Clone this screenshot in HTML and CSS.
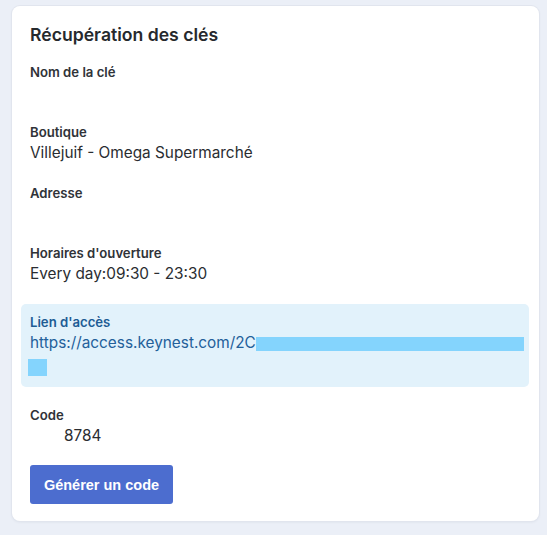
FILE: index.html
```html
<!DOCTYPE html>
<html lang="fr">
<head>
<meta charset="utf-8">
<title>Récupération des clés</title>
<link rel="stylesheet" href="styles.css">
</head>
<body>
<div class="card">
  <h2 class="title">Récupération des clés</h2>
  <div class="field">
    <div class="label">Nom de la clé</div>
    <div class="value"></div>
  </div>
  <div class="field">
    <div class="label">Boutique</div>
    <div class="value">Villejuif - Omega Supermarché</div>
  </div>
  <div class="field">
    <div class="label">Adresse</div>
    <div class="value"></div>
  </div>
  <div class="field">
    <div class="label">Horaires d'ouverture</div>
    <div class="value">Every day:09:30 - 23:30</div>
  </div>
  <div class="field link-box">
    <div class="label">Lien d'accès</div>
    <div class="value url">https://access.keynest.com/2C<span class="redact wide"></span><span class="redact small"></span></div>
  </div>
  <div class="field">
    <div class="label">Code</div>
    <div class="value code">8784</div>
  </div>
  <button class="btn">Générer un code</button>
</div>
</body>
</html>
```

FILE: styles.css
```css
html, body {
  margin: 0;
  padding: 0;
  background: #ebeff7;
}
body {
  padding: 6px 8px 14px 12px;
  font-family: Inter, "Noto Sans", sans-serif;
  color: #24272b;
}
.card {
  width: 527px;
  box-sizing: border-box;
  background: #fff;
  border-radius: 8px;
  box-shadow: 0 0 0 1px #e1e5ee, 0 1px 3px rgba(30, 40, 70, 0.08);
  padding: 18px 18px 17px 18px;
}
.title {
  margin: 0 0 16px 0;
  font-size: 17.6px;
  line-height: 22px;
  font-weight: 600;
  color: #26292d;
}
.field {
  margin-bottom: 18.4px;
}
.label {
  font-size: 13.15px;
  line-height: 20px;
  font-weight: 600;
  color: #303338;
}
.value {
  font-size: 15.35px;
  line-height: 22px;
  min-height: 22px;
  color: #2a2d31;
}
.link-box {
  background: #e2f2fb;
  border-radius: 5px;
  margin: 0 -8px 18px -9px;
  padding: 8.5px 3px 11px 9px;
}
.link-box .label {
  color: #1d5c94;
}
.url {
  color: #23609a;
}
.redact {
  display: inline-block;
  background: #84d4fd;
  vertical-align: top;
}
.redact.wide {
  width: 268px;
  height: 14px;
  margin-top: 5px;
}
.redact.small {
  width: 19px;
  height: 17px;
  margin-top: 5px;
  margin-left: -2px;
}
.code {
  padding-left: 34px;
}
.btn {
  display: block;
  width: 143px;
  height: 39px;
  border: none;
  border-radius: 3px;
  background: #4c6dcf;
  color: #fff;
  font-family: "Liberation Sans", Arial, sans-serif;
  font-weight: 700;
  font-size: 14.5px;
  padding: 0;
  cursor: pointer;
}
```
